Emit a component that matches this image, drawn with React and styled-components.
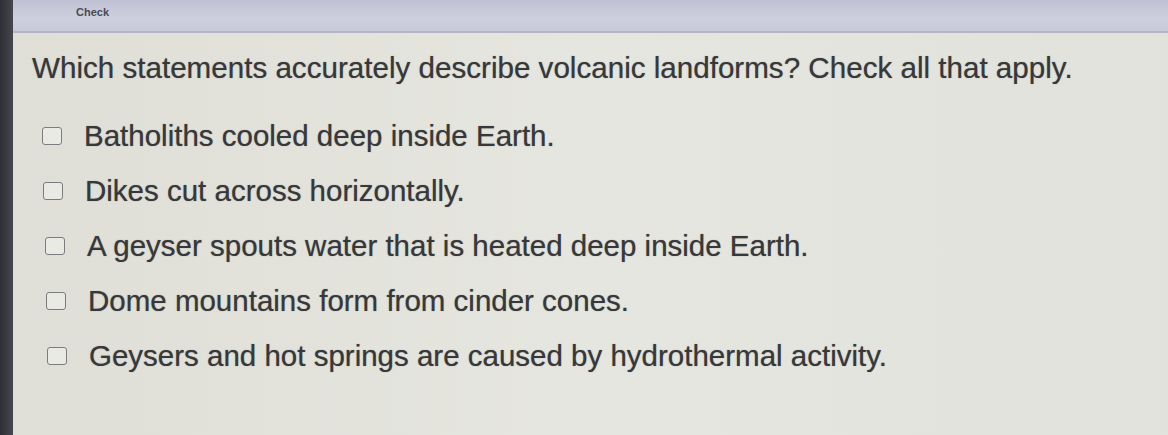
import React from 'react'
import styled, { createGlobalStyle } from 'styled-components'

const Global = createGlobalStyle`
  html, body {
    margin: 0;
    padding: 0;
    background: #e3e3dc;
  }
  body {
    font-family: 'Liberation Sans', Arial, sans-serif;
  }
`

const Screen = styled.div`
  width: 1168px;
  height: 435px;
  display: flex;
  overflow: hidden;
  background: #e3e3dc;
`

const Bezel = styled.div`
  width: 13px;
  flex-shrink: 0;
  background: linear-gradient(to right, #2e2e34, #46464e);
`

const Main = styled.div`
  flex: 1;
  display: flex;
  flex-direction: column;
  background: linear-gradient(to right, #dfdfd7, #e6e6e0 50%, #e2e2dc);
`

const TopBar = styled.div`
  height: 33px;
  flex-shrink: 0;
  padding: 5px 0 0 63px;
  background: linear-gradient(to bottom, #bfc0d3, #cfd0de 60%, #c7c8d8);
  border-bottom: 2px solid #b4b5c6;
  color: #4a4a55;
  font-size: 11px;
  font-weight: bold;
  line-height: 14px;
  box-sizing: border-box;
`

const Content = styled.div`
  padding: 20px 0 0 19px;
  color: #38383b;
`

const Question = styled.h1`
  margin: 0 0 38px;
  font-size: 29.6px;
  font-weight: normal;
  line-height: 30px;
  white-space: nowrap;
  text-shadow: 0 0 1px rgba(40, 40, 45, 0.55);
`

const Options = styled.ul`
  list-style: none;
  margin: 0;
  padding: 0;
  display: flex;
  flex-direction: column;
  gap: 25px;
`

const Option = styled.li`
  display: flex;
  align-items: center;
  gap: 22px;
  height: 30px;
  padding-left: ${p => p.$shift}px;
  font-size: 29.5px;
  white-space: nowrap;
  text-shadow: 0 0 1px rgba(40, 40, 45, 0.55);
`

const Box = styled.span`
  width: 18px;
  height: 16px;
  border: 1.5px solid #7c7c7e;
  border-radius: 3px;
  background: #eaeae4;
  flex-shrink: 0;
`

const options = [
  'Batholiths cooled deep inside Earth.',
  'Dikes cut across horizontally.',
  'A geyser spouts water that is heated deep inside Earth.',
  'Dome mountains form from cinder cones.',
  'Geysers and hot springs are caused by hydrothermal activity.',
]

export default function App() {
  return (
    <Screen>
      <Global />
      <Bezel />
      <Main>
        <TopBar>Check</TopBar>
        <Content>
          <Question>
            Which statements accurately describe volcanic landforms? Check all that apply.
          </Question>
          <Options>
            {options.map((text, i) => (
              <Option key={text} $shift={10 + Math.round(i * 1.3)}>
                <Box />
                {text}
              </Option>
            ))}
          </Options>
        </Content>
      </Main>
    </Screen>
  )
}
